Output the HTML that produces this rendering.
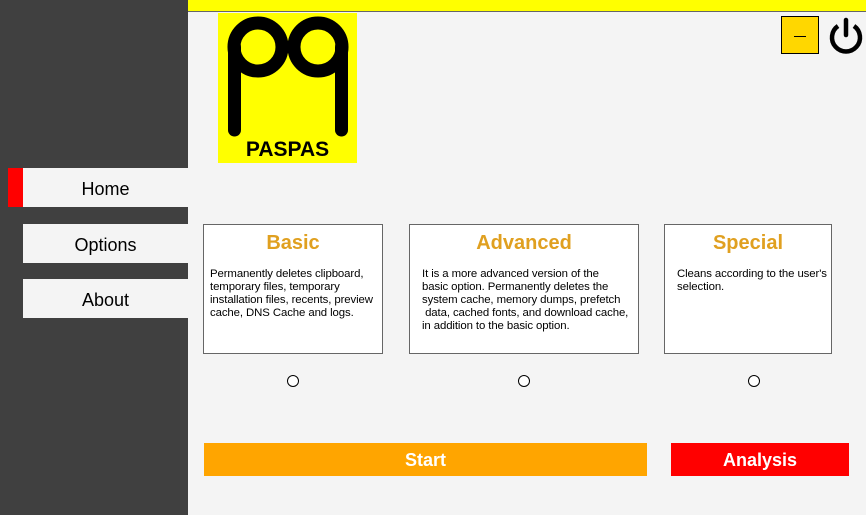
<!DOCTYPE html>
<html><head><style>
body{margin:0;width:866px;height:515px;background:#f4f4f4;position:relative;overflow:hidden;font-family:"Liberation Sans",sans-serif}
.a{position:absolute}
.nav{background:#f4f4f4;font-size:18px;color:#000;text-align:center;line-height:42px;height:39px}
.card{background:#fff;border:1px solid #666;box-sizing:border-box}
.card h2{margin:7px 0 0;text-align:center;color:#e0a020;font-size:20px;font-weight:bold}
.card p{margin:13px 0 0 6px;font-size:11.4px;line-height:13px;color:#000;white-space:nowrap;letter-spacing:-0.1px}
.radio{width:10px;height:10px;border:1px solid #000;border-radius:50%;background:#fff}
.btn{color:#fff;font-weight:bold;font-size:18px;text-align:center;line-height:35px;height:33px}
</style></head><body>
<div class="a" style="left:0;top:0;width:188px;height:515px;background:#404040"></div>
<div class="a" style="left:188px;top:0;width:678px;height:11px;background:#ffff00;border-bottom:1px solid #666"></div>
<div class="a" style="left:8px;top:168px;width:15px;height:39px;background:#f00"></div>
<div class="a nav" style="left:23px;top:168px;width:165px">Home</div>
<div class="a nav" style="left:23px;top:224px;width:165px">Options</div>
<div class="a nav" style="left:23px;top:279px;width:165px">About</div>
<div class="a" style="left:218px;top:13px;width:139px;height:150px;background:#ffff00">
<svg width="139" height="150" style="position:absolute;left:0;top:0">
<g fill="none" stroke="#000" stroke-width="13" stroke-linecap="round">
<circle cx="40" cy="34" r="24"/><circle cx="100" cy="34" r="24"/>
<line x1="16.5" y1="34" x2="16.5" y2="117"/><line x1="123.5" y1="34" x2="123.5" y2="117"/>
</g></svg>
<div class="a" style="left:0;top:125px;width:139px;text-align:center;font-weight:bold;font-size:21px;color:#000">PASPAS</div>
</div>
<div class="a" style="left:781px;top:16px;width:36px;height:36px;background:#ffd700;border:1px solid #000"><div class="a" style="left:12px;top:19px;width:12px;height:1px;background:#000"></div></div>
<svg class="a" style="left:827px;top:16px" width="38" height="40"><path d="M11 10 A14 14 0 1 0 27 10" fill="none" stroke="#000" stroke-width="4.5"/><line x1="19" y1="4" x2="19" y2="19" stroke="#000" stroke-width="4.5" stroke-linecap="round"/></svg>
<div class="a card" style="left:203px;top:224px;width:180px;height:130px"><h2>Basic</h2><p>Permanently deletes clipboard,<br>temporary files, temporary<br>installation files, recents, preview<br>cache, DNS Cache and logs.</p></div>
<div class="a card" style="left:409px;top:224px;width:230px;height:130px"><h2>Advanced</h2><p style="margin-left:12px">It is a more advanced version of the<br>basic option. Permanently deletes the<br>system cache, memory dumps, prefetch<br>&nbsp;data, cached fonts, and download cache,<br>in addition to the basic option.</p></div>
<div class="a card" style="left:664px;top:224px;width:168px;height:130px"><h2>Special</h2><p style="margin-left:12px">Cleans according to the user's<br>selection.</p></div>
<div class="a radio" style="left:287px;top:375px"></div>
<div class="a radio" style="left:518px;top:375px"></div>
<div class="a radio" style="left:748px;top:375px"></div>
<div class="a btn" style="left:204px;top:443px;width:443px;background:#ffa500">Start</div>
<div class="a btn" style="left:671px;top:443px;width:178px;background:#f00">Analysis</div>
</body></html>
